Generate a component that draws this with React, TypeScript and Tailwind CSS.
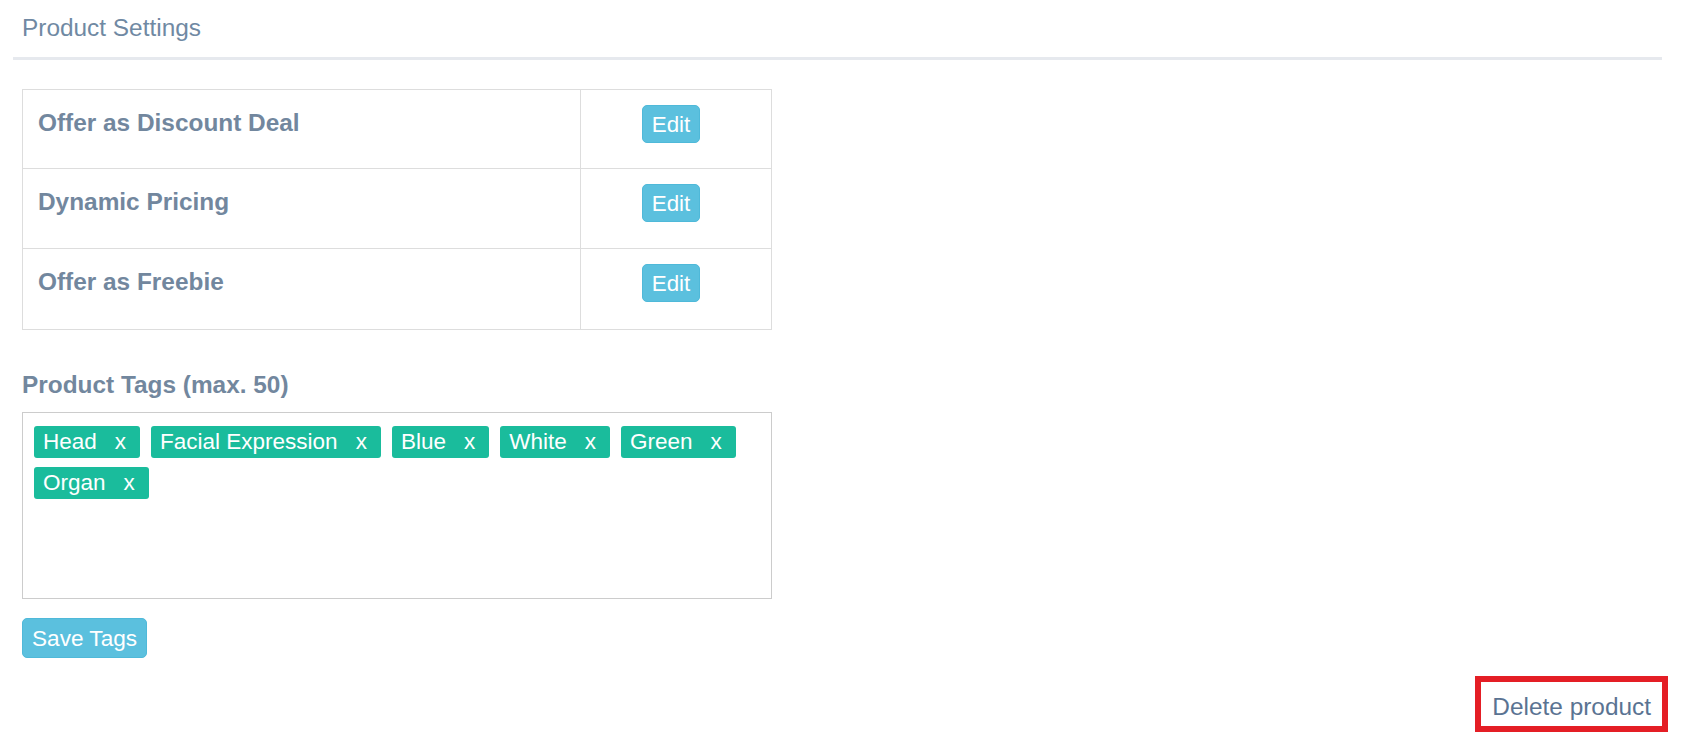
import React from "react";

const rows = ["Offer as Discount Deal", "Dynamic Pricing", "Offer as Freebie"];
const tags = ["Head", "Facial Expression", "Blue", "White", "Green", "Organ"];

export default function App() {
  return (
    <div className="w-[1682px] h-[738px] bg-white pl-[13px] pr-[20px] font-['Liberation_Sans',Arial,sans-serif] overflow-hidden">
      <div className="h-[60px] border-b-[3px] border-[#e6e9ee] pl-[9px] pt-[14px] text-[24.4px] leading-[27px] text-[#7089a3]">
        Product Settings
      </div>

      <div className="ml-[9px] mt-[29px] w-[750px] border border-[#dddddd]">
        {rows.map((r, i) => (
          <div
            key={r}
            className={`flex ${i === 0 ? "h-[79px]" : "h-[80px]"} ${i < rows.length - 1 ? "border-b border-[#dddddd]" : ""}`}
          >
            <div className="w-[558px] border-r border-[#dddddd] pl-[15px] pt-[19px] text-[24.4px] leading-[27px] font-bold text-[#72879e]">
              {r}
            </div>
            <div className="flex-1 flex justify-center items-start pr-[10px] pt-[15px]">
              <button className="h-[38px] px-[9px] flex items-center rounded-[5px] border border-[#4fb9d9] bg-[#5bc0de] text-white text-[22.4px] leading-[25px]">
                Edit
              </button>
            </div>
          </div>
        ))}
      </div>

      <div className="ml-[9px] mt-[41px] text-[24.4px] leading-[27px] font-bold text-[#72879e]">
        Product Tags (max. 50)
      </div>

      <div className="ml-[9px] mt-[14px] w-[750px] h-[187px] border border-[#cccccc] pl-[11px] pt-[13px] pr-[11px] flex flex-wrap content-start gap-x-[11px] gap-y-[9px]">
        {tags.map((t) => (
          <span
            key={t}
            className="h-[32px] pl-[9px] pr-[14px] flex items-center rounded-[3px] bg-[#1abc9c] text-white text-[22.5px] leading-[32px] whitespace-nowrap"
          >
            {t}
            <span className="ml-[18px]">x</span>
          </span>
        ))}
      </div>

      <button className="ml-[9px] mt-[19px] h-[40px] px-[9px] flex items-center rounded-[5px] border border-[#4fb9d9] bg-[#5bc0de] text-white text-[22.6px] leading-[25px]">
        Save Tags
      </button>

      <div className="flex justify-end mt-[24px]">
        <div className="h-[44px] pl-[11px] pr-[11px] pt-[11px] text-[24.4px] leading-[27px] text-[#5a7392] outline-[6px] outline-solid outline-[#e41e25]">
          Delete product
        </div>
      </div>
    </div>
  );
}
